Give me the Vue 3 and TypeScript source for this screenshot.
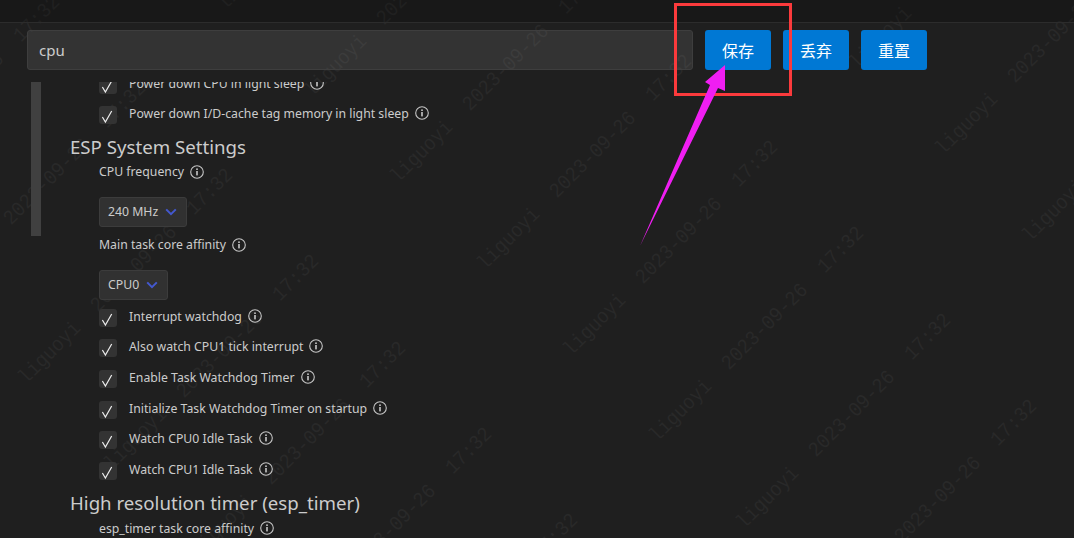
<script setup lang="ts">
interface Row { kind: 'check' | 'label' | 'select' | 'heading'; text: string; cls?: string }

const rows: Row[] = [
  { kind: 'check', text: 'Power down CPU in light sleep' },
  { kind: 'check', text: 'Power down I/D-cache tag memory in light sleep' },
  { kind: 'heading', text: 'ESP System Settings' },
  { kind: 'label', text: 'CPU frequency' },
  { kind: 'select', text: '240 MHz' },
  { kind: 'label', text: 'Main task core affinity', cls: 'again' },
  { kind: 'select', text: 'CPU0' },
  { kind: 'check', text: 'Interrupt watchdog' },
  { kind: 'check', text: 'Also watch CPU1 tick interrupt' },
  { kind: 'check', text: 'Enable Task Watchdog Timer' },
  { kind: 'check', text: 'Initialize Task Watchdog Timer on startup' },
  { kind: 'check', text: 'Watch CPU0 Idle Task' },
  { kind: 'check', text: 'Watch CPU1 Idle Task' },
  { kind: 'heading', text: 'High resolution timer (esp_timer)', cls: 'second' },
  { kind: 'label', text: 'esp_timer task core affinity', cls: 'last' },
]

const marks: { text: string; x: number; y: number }[] = []
const parts: [string, number, number][] = [
  ['liguoyi', 0, 0],
  ['2023-09-26', 84, -84],
  ['17:32', 160, -161],
]
for (let i = -8; i <= 8; i++) {
  for (let j = -4; j <= 4; j++) {
    for (const [text, dx, dy] of parts) {
      const x = 595 + i * 86.4 + j * 286 + dx
      const y = 325 + i * 86.4 - j * 287 + dy
      if (x > -80 && x < 1154 && y > -80 && y < 618) marks.push({ text, x, y })
    }
  }
}
</script>

<template>
  <div class="page">
    <div class="watermarks">
      <span
        v-for="(m, i) in marks"
        :key="i"
        class="mark"
        :style="{ left: m.x + 'px', top: m.y + 'px' }"
      >{{ m.text }}</span>
    </div>

    <header class="titlebar"></header>

    <div class="toolbar">
      <div class="search">cpu</div>
      <button class="btn">保存</button>
      <button class="btn">丢弃</button>
      <button class="btn">重置</button>
    </div>

    <main class="scroller">
      <div class="thumb"></div>
      <div class="content">
        <template v-for="(r, i) in rows" :key="i">
          <h2 v-if="r.kind === 'heading'" :class="['heading', r.cls]">{{ r.text }}</h2>
          <div v-else-if="r.kind === 'select'" class="select">
            <span>{{ r.text }}</span>
            <svg width="12" height="8" viewBox="0 0 12 8" fill="none" stroke="#4358cf" stroke-width="2">
              <path d="M1.2 1.4 L6 6.2 L10.8 1.4" />
            </svg>
          </div>
          <div v-else :class="r.kind === 'check' ? 'row' : ['label', r.cls]">
            <span v-if="r.kind === 'check'" class="box">
              <svg width="18" height="18" viewBox="0 0 18 18" fill="none" stroke="#ececec" stroke-width="1.2">
                <path d="M3.4 11 L6.4 16 L12.7 5" />
              </svg>
            </span>
            <span class="text">{{ r.text }}</span>
            <svg class="info" width="14" height="14" viewBox="0 0 14 14" fill="none">
              <circle cx="7" cy="7" r="6.3" stroke="#c6c6c6" stroke-width="1.1" />
              <rect x="6.2" y="6" width="1.6" height="4.4" fill="#c6c6c6" />
              <rect x="6.2" y="3.4" width="1.6" height="1.6" fill="#c6c6c6" />
            </svg>
          </div>
        </template>
      </div>
    </main>

    <svg class="annotation" width="1074" height="538" viewBox="0 0 1074 538">
      <rect x="675.5" y="4.5" width="115" height="90" fill="none" stroke="#fb3a3c" stroke-width="3" />
      <polygon points="640,246 710,85 705,82 725,65 725,91 718,88" fill="#f01ef2" />
    </svg>
  </div>
</template>

<style>
html, body { margin: 0; background: #1e1e1e; }
</style>

<style scoped>
.page {
  position: relative;
  width: 1074px;
  height: 538px;
  overflow: hidden;
  background: #1f1f1f;
  color: #cccccc;
  font-family: "Noto Sans", "Open Sans", sans-serif;
  font-size: 12.28px;
}
.watermarks {
  position: absolute;
  inset: 0;
  z-index: 0;
  pointer-events: none;
}
.mark {
  position: absolute;
  transform: translate(-50%, -50%) rotate(-45deg) scaleY(1.1);
  font-family: "Liberation Mono", monospace;
  font-size: 18.8px;
  line-height: 20px;
  color: #292929;
  white-space: nowrap;
}
.titlebar {
  position: relative;
  z-index: 1;
  height: 22px;
  border-bottom: 1px solid #2c2c2c;
  background: rgba(0, 0, 0, 0.2);
}
.toolbar {
  position: relative;
  z-index: 1;
  display: flex;
  gap: 12px;
  height: 40px;
  margin: 7px 0 12px;
  padding: 0 147px 0 27px;
}
.search {
  flex: 1;
  box-sizing: border-box;
  padding: 0 11px;
  line-height: 38px;
  font-size: 15px;
  background: rgba(255, 255, 255, 0.09);
  border: 1px solid #3e3e3e;
  border-radius: 3px;
}
.btn {
  width: 66px;
  height: 40px;
  padding: 0;
  border: none;
  border-radius: 3px;
  background: #0078d4;
  color: #fff;
  font-family: "Noto Sans CJK SC", sans-serif;
  font-size: 16px;
}
.scroller {
  position: relative;
  z-index: 1;
  height: 456px;
  overflow: hidden;
}
.thumb {
  position: absolute;
  left: 31px;
  top: 0;
  width: 10px;
  height: 154px;
  background: #404040;
}
.content {
  margin-top: -6.4px;
  padding-left: 99px;
}
.row {
  display: flex;
  align-items: flex-start;
  height: 30.6px;
}
.box {
  width: 18px;
  height: 18px;
  flex: none;
  margin-right: 12px;
  border-radius: 3px;
  background: #333333;
}
.box svg { display: block; }
.text { line-height: 15px; }
.info { margin-left: 6px; flex: none; }
.label {
  display: flex;
  align-items: center;
  height: 18px;
  margin: 6px 0 16px;
}
.label.again { margin-top: 9px; }
.label.last { margin: 6px 0 0; }
.select {
  display: flex;
  align-items: center;
  width: fit-content;
  box-sizing: border-box;
  height: 30px;
  padding: 0 9px 0 8px;
  gap: 7px;
  background: #313131;
  border: 1px solid #3c3c3c;
  border-radius: 3px;
}
.select + .row { margin-top: 9px; }
.heading {
  height: 20px;
  margin: 0 0 0 -29px;
  font-size: 18.66px;
  line-height: 20px;
  font-weight: 400;
  white-space: nowrap;
}
.heading.second { margin-top: 1px; }
.annotation {
  position: absolute;
  left: 0;
  top: 0;
  z-index: 2;
  pointer-events: none;
}
</style>
